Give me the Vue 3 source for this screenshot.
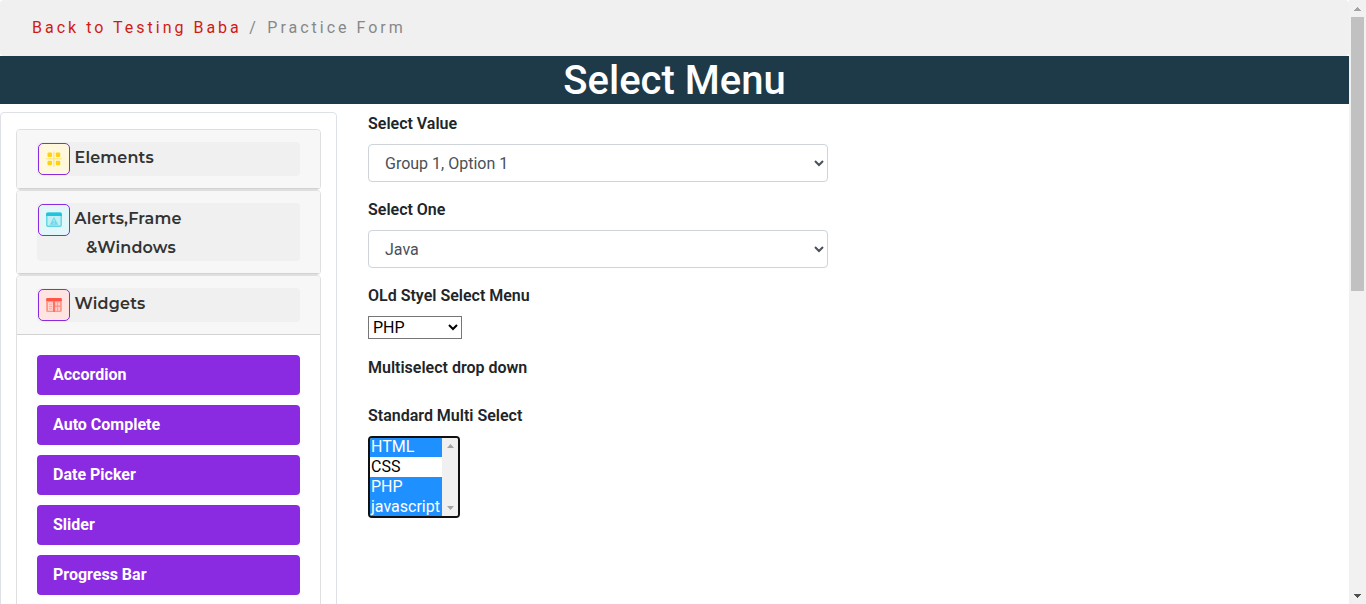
<script setup>
const links = ['Accordion', 'Auto Complete', 'Date Picker', 'Slider', 'Progress Bar']
const languages = [
  { name: 'HTML', selected: true },
  { name: 'CSS', selected: false },
  { name: 'PHP', selected: true },
  { name: 'javascript', selected: true },
]
</script>

<template>
  <div class="window">
    <div class="page">
      <nav class="breadcrumb"><a>Back to Testing Baba</a><span class="divider"> / </span>Practice Form</nav>
      <h1>Select Menu</h1>
      <div class="columns">
        <aside class="sidebar">
          <section class="card">
            <div class="card-header">
              <div class="menu-title">
                <span class="icon yellow">
                  <svg viewBox="0 0 16 16" width="16" height="16">
                    <path d="M7 0.5h1.6v15H7zM0.3 7h15.4v1.6H0.3z" fill="#ffe88a" />
                    <g fill="#ffd112">
                      <rect x="1.5" y="1.5" width="4.5" height="4.5" rx="1" />
                      <rect x="9.8" y="1.5" width="4.5" height="4.5" rx="1" />
                      <rect x="1.5" y="9.8" width="4.5" height="4.5" rx="1" />
                      <rect x="9.8" y="9.8" width="4.5" height="4.5" rx="1" />
                    </g>
                  </svg>
                </span>
                <span class="name">Elements</span>
              </div>
            </div>
          </section>
          <section class="card">
            <div class="card-header">
              <div class="menu-title double">
                <span class="icon cyan">
                  <svg viewBox="0 0 16 16" width="16" height="16">
                    <rect x="0.8" y="1.3" width="14.4" height="13" rx="1.3" fill="#c0eff6" stroke="#62d4e3" stroke-width="1.4" />
                    <path d="M0.1 4V2A1.5 1.5 0 0 1 1.6.6h12.8A1.5 1.5 0 0 1 15.9 2v2z" fill="#20c4dc" />
                    <path d="M8 5l4.3 7.7H3.7z" fill="#70d8e6" />
                    <path d="M8 7.5v2.7M8 11v1" stroke="#c6f1f7" stroke-width="1" />
                  </svg>
                </span>
                <span class="name">Alerts,Frame</span>
                <span class="name windows">&amp;Windows</span>
              </div>
            </div>
          </section>
          <section class="card open">
            <div class="card-header">
              <div class="menu-title">
                <span class="icon red">
                  <svg viewBox="0 0 16 16" width="16" height="16">
                    <rect x="0.2" y="1" width="15.6" height="14" rx="1.5" fill="#ff9488" />
                    <path d="M0.2 4V2.3A1.4 1.4 0 0 1 1.6.9h12.8a1.4 1.4 0 0 1 1.4 1.4V4z" fill="#ff5648" />
                    <path d="M8 4v11" stroke="#ff6054" stroke-width="1.3" />
                    <path d="M2 5.2h4.8v8.6H2z" fill="#ffd9d4" />
                    <path d="M3 7.2h3M3 9.5h3M3 11.8h3" stroke="#ff9488" stroke-width="0.8" />
                    <path d="M9.3 5.2h4.8v3.4H9.3zM9.3 10h4.8v3.8H9.3z" fill="#ffd0ca" />
                    <path d="M11.7 5.2v8.6" stroke="#ff9488" stroke-width="1" />
                  </svg>
                </span>
                <span class="name">Widgets</span>
              </div>
            </div>
            <ul class="links">
              <li v-for="link in links" :key="link">{{ link }}</li>
            </ul>
          </section>
        </aside>
        <main class="form">
          <label>Select Value</label>
          <select class="control"><option>Group 1, Option 1</option></select>
          <label>Select One</label>
          <select class="control"><option>Java</option></select>
          <label>OLd Styel Select Menu</label>
          <select class="old"><option>PHP</option></select>
          <label class="multi">Multiselect drop down</label>
          <label>Standard Multi Select</label>
          <div class="listbox">
            <div class="options">
              <div v-for="item in languages" :key="item.name" class="option" :class="{ selected: item.selected }">{{ item.name }}</div>
            </div>
            <div class="list-scroll">
              <svg width="7" height="4" viewBox="0 0 7 4"><path d="M0 4L3.5 0L7 4z" fill="#a3a3a3" /></svg>
              <svg width="7" height="4" viewBox="0 0 7 4"><path d="M0 0h7L3.5 4z" fill="#a3a3a3" /></svg>
            </div>
          </div>
        </main>
      </div>
    </div>
    <div class="scrollbar">
      <div class="arrow"><svg width="7" height="4" viewBox="0 0 7 4" shape-rendering="crispEdges"><path d="M3 0h1v1h1v1h1v1h1v1H0V3h1V2h1V1h1z" fill="#a3a3a3" /></svg></div>
      <div class="thumb"></div>
      <div class="arrow down"><svg width="7" height="4" viewBox="0 0 7 4" shape-rendering="crispEdges"><path d="M0 0h7v1H6v1H5v1H4v1H3V3H2V2H1V1H0z" fill="#505050" /></svg></div>
    </div>
  </div>
</template>

<style>
body { margin: 0; overflow: hidden; }
</style>

<style scoped>
* { box-sizing: border-box; }
.window { display: flex; width: 1366px; height: 604px; overflow: hidden; background: #fff; color: #212529; font: 400 16px/24px Roboto, sans-serif; }
.page { width: 1349px; height: 604px; overflow: hidden; }
.breadcrumb { height: 56px; padding: 16px 32px; border-radius: 4px; background: #f0f0f0; color: #868889; letter-spacing: 3px; white-space: pre; }
.breadcrumb a { color: #d01a12; }
.divider { margin-left: 0.5px; margin-right: 1.5px; }
h1 { height: 48px; margin: 0 0 8px; padding-top: 1px; background: #1e3948; color: #fff; text-align: center; font-size: 40px; font-weight: 500; line-height: 48px; }
.columns { display: flex; }
.sidebar { width: 337px; height: 520px; padding: 16px 15px; border: 1px solid #dee2e6; border-radius: 4px; }
.card { width: 305px; border: 1px solid #dfdfdf; border-radius: 4px; overflow: hidden; }
.card.open { height: 500px; }
.card-header { padding: 12px 20px; border-bottom: 1px solid #d2d2d2; background: #f7f7f7; }
.menu-title { display: grid; grid-template-columns: 37.5px 1fr; grid-template-rows: 34px; height: 34px; border-radius: 4px; background: #f0f0f0; }
.menu-title.double { height: 58px; grid-template-rows: 34px 24px; }
.icon { display: flex; align-items: center; justify-content: center; width: 32px; height: 32px; margin: 1px; border: 1px solid #8a2be2; border-radius: 5px; }
.yellow { background: #fff8dc; }
.cyan { background: #e2f7fa; }
.red { background: #ffe4e1; }
.name { justify-self: start; color: #333; font-family: Montserrat, Inter, sans-serif; font-size: 16px; font-weight: 600; letter-spacing: 0.17px; line-height: 31px; white-space: nowrap; }
.windows { grid-column: 2; margin-left: 11.5px; line-height: 21px; }
.links { display: grid; gap: 10px; margin: 0; padding: 20px; list-style: none; }
.links li { height: 40px; padding: 8px 16px; border-radius: 4px; background: #8a2be2; color: #fff; font-weight: 700; }
.form { display: flex; flex-direction: column; align-items: flex-start; margin-left: 31px; }
label { margin-bottom: 8px; font-weight: 600; line-height: 24px; }
select { margin: 0; font-family: Roboto, sans-serif; font-size: 16px; }
.control { width: 460px; height: 38px; margin-bottom: 16px; padding: 6px 12px; border: 1px solid #ced4da; border-radius: 4px; background: #fff; color: #495057; line-height: 24px; }
.old { width: 94px; height: 23px; border: 1px solid #767676; border-radius: 0; background: #fff; color: #000; }
.multi { margin: 17px 0 24px; }
.listbox { display: flex; width: 92px; height: 82px; overflow: hidden; border: 2px solid #101010; border-radius: 4px; }
.options { width: 72px; margin-top: -1px; }
.option { height: 20px; padding-left: 1px; color: #000; line-height: 20px; }
.selected { background: #1e90ff; color: #fff; }
.list-scroll { display: flex; flex: 1; flex-direction: column; align-items: center; justify-content: space-between; padding: 6px 0; background: #f0f0f0; }
.scrollbar { display: flex; flex-direction: column; width: 17px; height: 604px; background: #f1f1f1; }
.arrow { display: flex; align-items: center; justify-content: center; height: 17px; }
.arrow svg { display: block; }
.thumb { width: 13px; height: 274px; margin: 0 2px; background: #c1c1c1; }
.down { margin-top: auto; }
</style>
